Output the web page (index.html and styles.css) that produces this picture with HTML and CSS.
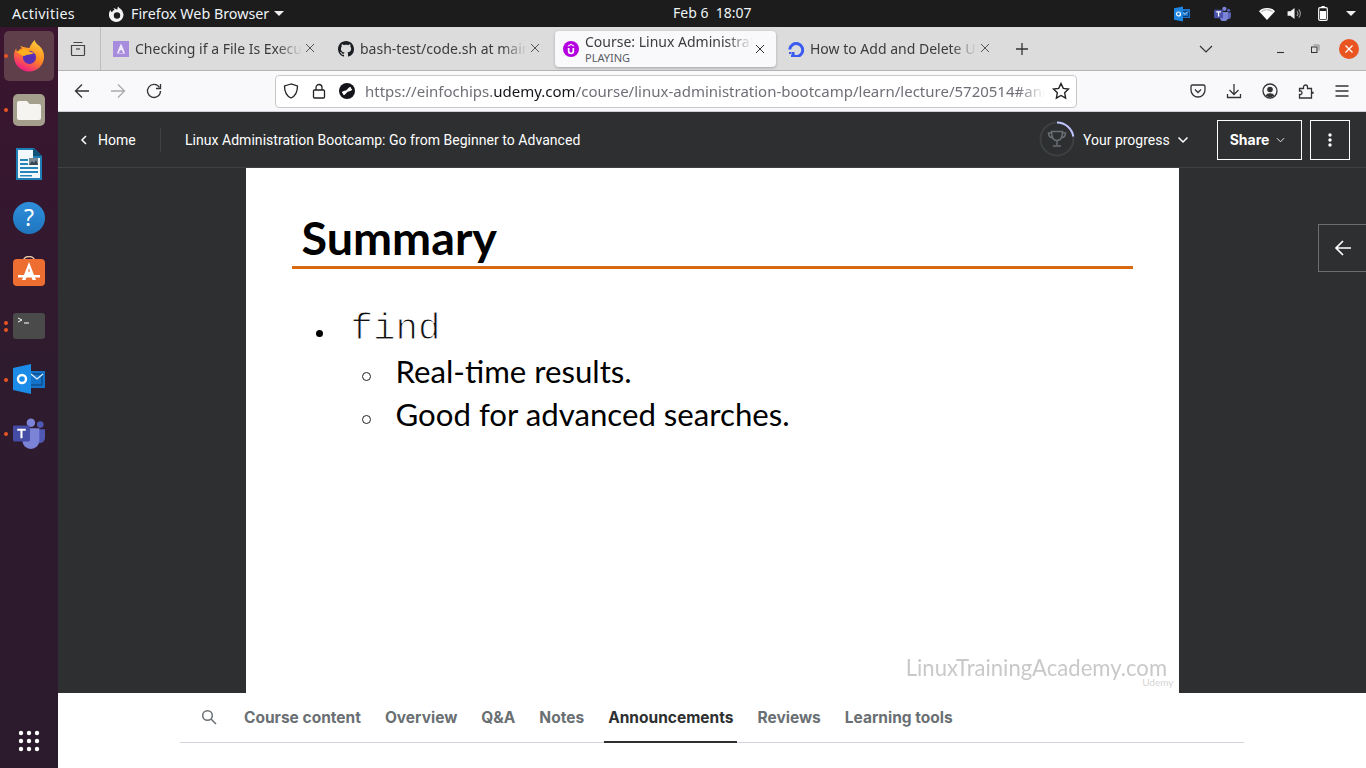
FILE: index.html
```html
<!DOCTYPE html>
<html lang="en">
<head>
<meta charset="utf-8">
<title>Course: Linux Administration Bootcamp</title>
<link rel="stylesheet" href="styles.css">
</head>
<body>
<header class="topbar">
  <div class="top-left">
    <span class="activities">Activities</span>
    <span class="app-menu">
      <svg class="app-icon" viewBox="0 0 16 16"><path fill="#f2f2f2" d="M9 .5c.8 1.400 1.800 1.700 3 2.700A7.300 7.300 0 1 1 1.600 4c.2 1.300.8 2 1.500 2.300C3.300 4.800 4.300 4 5.700 3.900 4.900 3.200 4.500 2.600 4.700 2 6 3 7.500 3 8.600 3.500 8.400 2.500 8.500 1.500 9 .5Z"/><circle cx="8" cy="9.500" r="3.200" fill="#1d1d1d"/></svg>
      <span>Firefox Web Browser</span>
      <i class="caret"></i>
    </span>
  </div>
  <div class="clock">Feb 6&nbsp; 18:07</div>
  <div class="tray">
    <svg class="tray-outlook" viewBox="0 0 16 16"><rect x="6" y="3" width="10" height="9" fill="#1a73c8"/><path d="M7.500 5.500h7v5h-7z" fill="none" stroke="#0c3f78" stroke-width="1"/><path d="M8 5.500l3 3 3-3" fill="none" stroke="#cfe6fa" stroke-width=".9"/><path d="M0 2.300 9 .5v15L0 13.700z" fill="#1e86e0"/><circle cx="4.500" cy="8" r="2" fill="none" stroke="#fff" stroke-width="1.200"/></svg>
    <svg class="tray-teams" viewBox="0 0 18 16"><circle cx="11" cy="3" r="2.300" fill="#7b83d6"/><circle cx="15.500" cy="4.500" r="1.700" fill="#5b63b8"/><path d="M13 7h5v4.500a2.500 2.500 0 0 1-5 0z" fill="#5b63b8"/><path d="M6 6.500h9v5.500a4.500 4.500 0 0 1-9 0z" fill="#7b83d6"/><rect y="4" width="9.500" height="9" rx="1" fill="#4b53aa"/><path d="M2.300 6.300h5M4.800 6.300v5" stroke="#fff" stroke-width="1.400" fill="none"/></svg>
    <svg class="tray-wifi" viewBox="0 0 16 12"><path fill="#fff" d="M8 12 0 3.200C2 1.200 4.800 0 8 0s6 1.200 8 3.200z"/><path fill="#1d1d1d" d="M2 3.400A8.600 8.600 0 0 1 8 1.200c2.300 0 4.400.8 6 2.200l-.8.9A7.600 7.600 0 0 0 8 2.300c-2 0-3.900.8-5.200 2z" opacity=".35"/></svg>
    <svg class="tray-vol" viewBox="0 0 16 14"><path fill="#f2f2f2" d="M0 4.500h3L7.500 1v12L3 9.500H0z"/><path fill="none" stroke="#aaa" stroke-width="1.100" d="M10 4.300a4 4 0 0 1 0 5.400M12 2.500a6.600 6.600 0 0 1 0 9"/></svg>
    <svg class="tray-batt" viewBox="0 0 10 15"><path d="M3.500.5h3v1.300" fill="none" stroke="#fff"/><rect x=".7" y="1.700" width="8.600" height="12.600" rx="1.300" fill="none" stroke="#fff" stroke-width="1.200"/><rect x="2" y="5" width="6" height="8" fill="#fff"/></svg>
    <i class="caret caret-tray"></i>
  </div>
</header>

<div class="desktop">
  <aside class="dock">
    <div class="dock-item active"><i class="dot"></i>
      <svg class="dock-icon" viewBox="0 0 34 34"><defs><linearGradient id="ff" x1=".8" y1="0" x2=".3" y2="1"><stop offset="0" stop-color="#ffd23a"/><stop offset=".5" stop-color="#ff8a20"/><stop offset="1" stop-color="#f0148a"/></linearGradient></defs><path fill="url(#ff)" d="M23 0c.3 2.800 2.800 4.500 5 6.500 3 2.800 5 6.300 5 10.900C33 26.500 26 33.500 17 33.500 8 33.500 1 26 1 17c0-3 .7-6 2.400-8 .2 1.500.6 2.700 1.700 3.500C6 10.400 8 9 10 8.800 8.700 8 8 7 8 6c3 1.700 6 1.700 9.500 2.500C18 6 20.500 3 23 0Z"/><circle cx="17.500" cy="18.500" r="7" fill="#5b2fb5"/><path fill="#ffb01f" d="M3 12.500c2 0 7-3.500 10-2.500 3 1 5 3 9.500 3.500-3 2.500-7.500 1.500-9.500 3-2.500 2-6-3-10-4Z"/></svg>
    </div>
    <div class="dock-item"><i class="dot"></i>
      <svg class="dock-icon" viewBox="0 0 32 32"><rect width="32" height="32" rx="5" fill="#a49e8c"/><path d="M4 9a2 2 0 0 1 2-2h8l2.500 3H26a2 2 0 0 1 2 2v12a2 2 0 0 1-2 2H6a2 2 0 0 1-2-2z" fill="#f6f4f0"/></svg>
    </div>
    <div class="dock-item">
      <svg class="dock-icon" viewBox="0 0 32 32"><path d="M3 0h18l8 8v24H3z" fill="#1d7fb5"/><path d="M5 2h15v8h7v20H5z" fill="#f3f8fb"/><path d="M20 0l9 8h-9z" fill="#0f5378"/><rect x="7" y="11" width="8" height="2" fill="#2585b9"/><rect x="7" y="15" width="8" height="2" fill="#2585b9"/><rect x="7" y="19" width="18" height="2" fill="#2585b9"/><rect x="7" y="23" width="18" height="2" fill="#2585b9"/><rect x="7" y="27" width="12" height="1.500" fill="#2585b9"/><rect x="16" y="10" width="9" height="7" fill="#7a8b97"/><path d="M16 17l3-4 2 2 2-3 2 5z" fill="#37474f"/></svg>
    </div>
    <div class="dock-item">
      <svg class="dock-icon" viewBox="0 0 32 32"><defs><linearGradient id="hp" x1="0" y1="0" x2="0" y2="1"><stop offset="0" stop-color="#2f8fdc"/><stop offset="1" stop-color="#1f75bd"/></linearGradient></defs><circle cx="16" cy="16" r="16" fill="url(#hp)"/><text class="help-q" x="16" y="24" text-anchor="middle">?</text></svg>
    </div>
    <div class="dock-item">
      <svg class="dock-icon" viewBox="0 0 32 32"><path d="M10.500 5c0-6 11-6 11 0" fill="none" stroke="#e9c9a8" stroke-width="1.500"/><rect y="3" width="32" height="27" rx="4" fill="#ee6d31"/><path d="M16 6 9 24h3.500l1.500-4.500h4l1.500 4.500H23z M15 15.500l1-3 1 3z" fill="#fff" fill-rule="evenodd"/><rect x="5" y="19" width="22" height="2.500" fill="#fff"/></svg>
    </div>
    <div class="dock-item"><i class="dot dot-a"></i><i class="dot dot-b"></i>
      <svg class="dock-icon" viewBox="0 0 32 26"><rect width="32" height="26" rx="3" fill="#4a4a4a"/><path d="M5 5l4 2-4 2" fill="none" stroke="#fff" stroke-width="1"/><rect x="11" y="9.500" width="5" height="1" fill="#fff"/></svg>
    </div>
    <div class="dock-item"><i class="dot"></i>
      <svg class="dock-icon" viewBox="0 0 32 32"><rect x="14" y="7" width="18" height="17" fill="#1473c8" /><path d="M17 10h12v11H17z" fill="none" stroke="#0b3f75" stroke-width="1"/><path d="M18 10l6 5 6-5" fill="none" stroke="#dff0ff" stroke-width="1.300"/><path d="M0 4 18 0v30L0 26z" fill="#1b8ce8"/><circle cx="9" cy="15" r="4" fill="none" stroke="#fff" stroke-width="2.400"/></svg>
    </div>
    <div class="dock-item"><i class="dot"></i>
      <svg class="dock-icon" viewBox="0 0 34 34"><circle cx="19" cy="5" r="4.500" fill="#7b83d6"/><circle cx="29" cy="7" r="3.500" fill="#5058b5"/><path d="M23 12h11v9a5.500 5.500 0 0 1-11 0z" fill="#5058b5"/><path d="M10 11h18v13a9 9 0 0 1-18 0z" fill="#7b83d6"/><rect y="8" width="18" height="17" rx="1.500" fill="#444ca6"/><path d="M4.500 12.500h9M9 12.500v9" stroke="#fff" stroke-width="2.200" fill="none"/></svg>
    </div>
    <div class="dock-apps">
      <svg class="grid-icon" viewBox="0 0 22 22" fill="#fff"><circle cx="3" cy="3" r="2.200"/><circle cx="11" cy="3" r="2.200"/><circle cx="19" cy="3" r="2.200"/><circle cx="3" cy="11" r="2.200"/><circle cx="11" cy="11" r="2.200"/><circle cx="19" cy="11" r="2.200"/><circle cx="3" cy="19" r="2.200"/><circle cx="11" cy="19" r="2.200"/><circle cx="19" cy="19" r="2.200"/></svg>
    </div>
  </aside>

  <main class="browser">
    <div class="tabbar">
      <div class="view-all">
        <svg class="ic16" viewBox="0 0 16 16" fill="none" stroke="#444" stroke-width="1.200"><path d="M3.500 1.500h9M1.500 4.500h13v9a1 1 0 0 1-1 1h-11a1 1 0 0 1-1-1z"/><path d="M6 8h4"/></svg>
      </div>
      <div class="tab">
        <svg class="fav" viewBox="0 0 16 16"><rect width="16" height="16" fill="#a78bdc"/><path d="M8 2.500c-1.400 3-3 6-4 10h8c-1-4-2.600-7-4-10zM6 12c.4-2 1.200-3 2-3s1.600 1 2 3z" fill="#efe9fb" fill-rule="evenodd"/></svg>
        <span class="tab-title">Checking if a File Is Executable</span>
        <svg class="x" viewBox="0 0 10 10"><path d="M1 1l8 8M9 1l-8 8"/></svg>
      </div>
      <div class="tab">
        <svg class="fav" viewBox="0 0 16 16"><path fill="#1b1f23" d="M8 0C3.580 0 0 3.580 0 8c0 3.540 2.290 6.530 5.470 7.590.4.070.55-.17.55-.38 0-.19-.01-.82-.01-1.490-2.010.37-2.530-.49-2.690-.94-.09-.23-.48-.94-.82-1.130-.28-.15-.68-.52-.01-.53.63-.01 1.080.58 1.230.82.720 1.210 1.870.87 2.330.66.070-.52.280-.87.510-1.070-1.780-.2-3.640-.89-3.640-3.950 0-.87.310-1.590.820-2.150-.08-.2-.36-1.020.08-2.120 0 0 .67-.21 2.200.82.640-.18 1.320-.27 2-.27s1.360.09 2 .27c1.530-1.040 2.200-.82 2.200-.82.440 1.100.16 1.920.08 2.120.510.560.820 1.270.820 2.150 0 3.070-1.870 3.750-3.650 3.950.29.250.54.730.54 1.480 0 1.070-.01 1.930-.01 2.200 0 .21.150.46.550.38A8.010 8.010 0 0 0 16 8c0-4.420-3.580-8-8-8z"/></svg>
        <span class="tab-title">bash-test/code.sh at main</span>
        <svg class="x" viewBox="0 0 10 10"><path d="M1 1l8 8M9 1l-8 8"/></svg>
      </div>
      <div class="tab tab-active">
        <div class="tab-card">
          <svg class="fav" viewBox="0 0 16 16"><circle cx="8" cy="8" r="8" fill="#b400e0"/><path d="M4.800 7v3a3.200 3.200 0 0 0 6.400 0V7h-1.700v3a1.500 1.500 0 0 1-3 0V7zM8 2.800 4.800 4.700v1.100L8 4l3.200 1.800V4.700z" fill="#fff"/></svg>
          <div class="tab-stack">
            <span class="tab-title">Course: Linux Administration</span>
            <span class="tab-sub">PLAYING</span>
          </div>
          <svg class="x x-dark" viewBox="0 0 10 10"><path d="M1 1l8 8M9 1l-8 8"/></svg>
        </div>
      </div>
      <div class="tab">
        <svg class="fav" viewBox="0 0 16 16"><path fill="none" stroke="#3b5bf0" stroke-width="3" d="M4 14A6.500 6.500 0 1 0 1.700 8.500"/><rect x="3.500" y="11" width="3" height="3" fill="#3b5bf0"/><rect x="1" y="11" width="2" height="2" fill="#3b5bf0"/><rect x="3" y="14" width="2" height="2" fill="#3b5bf0"/></svg>
        <span class="tab-title">How to Add and Delete Users</span>
        <svg class="x" viewBox="0 0 10 10"><path d="M1 1l8 8M9 1l-8 8"/></svg>
      </div>
      <div class="new-tab">
        <svg class="ic14" viewBox="0 0 14 14"><path d="M7 1v12M1 7h12" stroke="#333" stroke-width="1.300" fill="none"/></svg>
      </div>
      <div class="tab-list">
        <svg class="ic14" viewBox="0 0 14 14"><path d="M1 4l6 6 6-6" stroke="#333" stroke-width="1.200" fill="none"/></svg>
      </div>
      <div class="wm-btns">
        <span class="wm"><svg class="ic10" viewBox="0 0 10 10"><path d="M1 8.500h7" stroke="#333" stroke-width="1.100" fill="none"/></svg></span>
        <span class="wm"><svg class="ic10" viewBox="0 0 10 10" fill="none" stroke="#333"><rect x="1.500" y="3" width="5.500" height="5.500"/><path d="M3.500 1h5.500v5.500" stroke="#888"/></svg></span>
        <span class="wm wm-close"><svg class="ic10" viewBox="0 0 10 10"><path d="M1.500 1.500l7 7M8.500 1.500l-7 7" stroke="#fff" stroke-width="1.300" fill="none"/></svg></span>
      </div>
    </div>

    <div class="toolbar">
      <span class="tbtn"><svg class="ic16" viewBox="0 0 16 16" fill="none" stroke="#333" stroke-width="1.300"><path d="M15 8H1.500M8 1.500 1.500 8 8 14.500"/></svg></span>
      <span class="tbtn"><svg class="ic16" viewBox="0 0 16 16" fill="none" stroke="#aaa" stroke-width="1.300"><path d="M1 8h13.500M8 1.500 14.500 8 8 14.500"/></svg></span>
      <span class="tbtn"><svg class="ic16" viewBox="0 0 16 16" fill="none" stroke="#333" stroke-width="1.300"><path d="M13.500 4.500A6.500 6.500 0 1 0 14.500 8"/><path d="M14.500 1v4.500H10" /></svg></span>
      <div class="urlbar">
        <svg class="ic16" viewBox="0 0 16 16" fill="none" stroke="#222" stroke-width="1.300"><path d="M8 1 1.500 3c0 6 1.500 9.800 6.500 12 5-2.200 6.500-6 6.500-12z"/></svg>
        <svg class="ic16" viewBox="0 0 16 16" fill="none" stroke="#222" stroke-width="1.300"><rect x="2.500" y="7" width="11" height="8" rx="1"/><path d="M5 7V4.500a3 3 0 0 1 6 0V7"/></svg>
        <svg class="ic16" viewBox="0 0 16 16"><circle cx="8" cy="8" r="8" fill="#15141a"/><path d="M5 11l6-6M4 9.500l2.500-1M9.500 7.500 12 6.500" stroke="#fff" stroke-width="2" fill="none" stroke-linecap="round"/></svg>
        <span class="url"><span class="url-dim">https://einfochips.</span>udemy.com<span class="url-dim">/course/linux-administration-bootcamp/learn/lecture/5720514#announcements</span></span>
        <svg class="ic18" viewBox="0 0 18 18" fill="none" stroke="#222" stroke-width="1.400"><path d="m9 1.500 2.300 4.900 5.200.7-3.800 3.700.9 5.300L9 13.500l-4.600 2.600.9-5.300L1.500 7.100l5.200-.7z"/></svg>
      </div>
      <div class="tools">
        <svg class="ic16" viewBox="0 0 16 16" fill="none" stroke="#333" stroke-width="1.300"><path d="M2.500 2h11A1.500 1.500 0 0 1 15 3.500V7a7 7 0 0 1-14 0V3.500A1.500 1.500 0 0 1 2.500 2z"/><path d="m5 6.500 3 3 3-3"/></svg>
        <svg class="ic16" viewBox="0 0 16 16" fill="none" stroke="#333" stroke-width="1.300"><path d="M8 1v10M3.500 7 8 11.500 12.500 7M1.500 11v3.500h13V11"/></svg>
        <svg class="ic16" viewBox="0 0 16 16"><circle cx="8" cy="8" r="7" fill="none" stroke="#333" stroke-width="1.300"/><circle cx="8" cy="6.500" r="2.800" fill="#333"/><path d="M3.500 12.500a5 4 0 0 1 9 0 7 7 0 0 1-9 0z" fill="#333"/></svg>
        <svg class="ic16" viewBox="0 0 16 16" fill="none" stroke="#333" stroke-width="1.300"><path d="M1.500 5.500h4V4a2 2 0 0 1 4 0v1.500h4V9.500H15v.5a0 0 0 0 1 0 0H13.500V15h-12v-3.500H3a2 2 0 0 0 0-3.500H1.500z"/></svg>
        <svg class="ic16" viewBox="0 0 16 16" fill="none" stroke="#333" stroke-width="1.300"><path d="M1.500 3h13M1.500 8h13M1.500 13h13"/></svg>
      </div>
    </div>

    <div class="course-head">
      <div class="home">
        <svg class="chev-left" viewBox="0 0 8 10"><path d="M6 1 2 5l4 4" fill="none" stroke="#fff" stroke-width="1.500"/></svg>
        <span>Home</span>
      </div>
      <span class="course-title">Linux Administration Bootcamp: Go from Beginner to Advanced</span>
      <div class="progress">
        <svg class="ring" viewBox="0 0 36 36"><circle cx="18" cy="18" r="16.500" fill="none" stroke="#3e4143" stroke-width="2"/><path d="M18 1.500A16.500 16.500 0 0 1 34.300 15.500" fill="none" stroke="#c0c4fc" stroke-width="2"/><path d="M12.500 10.500h11c0 6-1.500 9-5.500 9s-5.500-3-5.500-9zM12.500 12h-3c0 3 1.500 4.500 4 4.800M23.500 12h3c0 3-1.500 4.500-4 4.800M18 19.500v4.500M14 25h8" fill="none" stroke="#6a6f73" stroke-width="1.500"/></svg>
        <span class="progress-label">Your progress</span>
        <svg class="chev" viewBox="0 0 12 8"><path d="m1.500 1.500 4.500 4.500 4.500-4.500" fill="none" stroke="#fff" stroke-width="1.500"/></svg>
      </div>
      <div class="share">Share <svg class="chev-sm" viewBox="0 0 10 6"><path d="M1 1l4 4 4-4" fill="none" stroke="#fff"/></svg></div>
      <div class="more"><svg class="kebab" viewBox="0 0 4 14" fill="#fff"><circle cx="2" cy="2" r="1.700"/><circle cx="2" cy="7" r="1.700"/><circle cx="2" cy="12" r="1.700"/></svg></div>
    </div>

    <div class="stage">
      <section class="slide">
        <h1 class="slide-title">Summary</h1>
        <div class="slide-rule"></div>
        <ul class="bullets">
          <li class="cmd"><span class="cmd-text">find</span>
            <ul class="sub">
              <li>Real-time results.</li>
              <li>Good for advanced searches.</li>
            </ul>
          </li>
        </ul>
        <div class="mark">
          <span class="mark-main">LinuxTrainingAcademy.com</span>
          <span class="mark-sub">Udemy</span>
        </div>
      </section>
      <div class="side-arrow">
        <svg class="ic18" viewBox="0 0 18 18" fill="none" stroke="#fff" stroke-width="1.700"><path d="M17 9H2M9 2 2 9l7 7"/></svg>
      </div>
    </div>

    <nav class="lecture-tabs">
      <div class="lt-inner">
        <svg class="lt-search" viewBox="0 0 16 16" fill="none" stroke="#6a6f73" stroke-width="1.500"><circle cx="6.500" cy="6.500" r="4.800"/><path d="m10 10 5 5"/></svg>
        <span class="lt">Course content</span>
        <span class="lt">Overview</span>
        <span class="lt">Q&amp;A</span>
        <span class="lt">Notes</span>
        <span class="lt lt-active">Announcements</span>
        <span class="lt">Reviews</span>
        <span class="lt">Learning tools</span>
      </div>
    </nav>
  </main>
</div>
</body>
</html>
```
FILE: styles.css
```css
* { box-sizing: border-box; }
html, body { margin: 0; height: 100%; overflow: hidden; }
body { width: 1366px; height: 768px; display: flex; flex-direction: column; font-family: "Noto Sans", sans-serif; background: #2d2f31; }
svg { display: block; flex: none; }

.topbar { height: 27px; flex: none; background: #1c1c1c; color: #eef3f7; display: flex; align-items: center; position: relative; font-size: 14.300px; font-family: "Noto Sans", sans-serif; }
.top-left { display: flex; align-items: center; padding-left: 12px; }
.activities { width: 97px; letter-spacing: .35px; }
.app-menu { display: flex; align-items: center; }
.app-icon { width: 16px; height: 16px; margin-right: 6px; }
.caret { display: block; width: 0; height: 0; border: 5px solid transparent; border-top: 5px solid #eee; border-bottom: 0; margin-left: 5px; }
.clock { position: absolute; left: 673px; top: 4px; line-height: 18px; font-size: 14px; }
.tray { margin-left: auto; display: flex; align-items: center; padding-right: 10px; }
.tray-outlook { width: 16px; height: 16px; margin-right: 24px; }
.tray-teams { width: 17px; height: 15px; margin-right: 28px; }
.tray-wifi { width: 16px; height: 12px; margin-right: 12px; }
.tray-vol { width: 16px; height: 13px; margin-right: 15px; }
.tray-batt { width: 10px; height: 15px; margin-right: 13px; }
.caret-tray { margin-left: 5px; border-width: 5px; border-bottom: 0; }

.desktop { flex: 1; display: flex; min-height: 0; }
.dock { width: 58px; flex: none; background: linear-gradient(180deg, #3b1430 0%, #2f1b2e 45%, #2b1a2c 100%); display: flex; flex-direction: column; align-items: center; padding-top: 1px; position: relative; }
.dock-item { width: 50px; height: 54px; display: flex; align-items: center; justify-content: center; position: relative; border-radius: 5px; flex: none; }
.dock-item.active { height: 50px; margin: 3px 0 2px; background: #5e3f4a; }
.dot { position: absolute; width: 4px; height: 4px; left: 0; top: 50%; margin-top: -2px; border-radius: 50%; background: #e95420; }
.dot-a { margin-top: -5px; }
.dot-b { margin-top: 2px; }
.dock-icon { width: 32px; height: 32px; }
.help-q { font: 23px "Noto Sans", sans-serif; fill: #fff; }
.dock-apps { margin-top: auto; height: 54px; display: flex; align-items: center; padding-bottom: 0; }
.grid-icon { width: 22px; height: 22px; }

.browser { flex: 1; min-width: 0; display: flex; flex-direction: column; }
.ic10 { width: 10px; height: 10px; }
.ic14 { width: 14px; height: 14px; }
.ic16 { width: 16px; height: 16px; }
.ic18 { width: 18px; height: 18px; }

.tabbar { height: 44px; flex: none; background: #dcdcdc; border-bottom: 1px solid #b4b4b4; display: flex; align-items: center; color: #3c3c3c; }
.view-all { width: 43px; height: 43px; border-right: 1px solid #bdbdbd; display: flex; align-items: center; justify-content: center; margin-right: 3px; padding-right: 2px; }
.tab { width: 225px; height: 43px; padding-left: 9px; display: flex; align-items: center; flex: none; position: relative; }
.fav { width: 16px; height: 16px; margin-right: 6px; }
.tab-title { display: block; width: 167px; overflow: hidden; white-space: nowrap; font-size: 14px; line-height: 18px; -webkit-mask-image: linear-gradient(90deg, #000 85%, transparent 100%); mask-image: linear-gradient(90deg, #000 85%, transparent 100%); }
.x { width: 10px; height: 10px; margin-left: 3px; margin-top: -1px; fill: none; stroke: #555; stroke-width: 1; }
.x-dark { stroke: #333; margin-left: 3px; margin-top: 0; }
.tab-active { padding-left: 1px; }
.tab-card { width: 221px; height: 36px; background: #f9f9fb; border-radius: 4px; box-shadow: 0 1px 3px rgba(0,0,0,.25); display: flex; align-items: center; padding-left: 8px; }
.tab-stack { display: flex; flex-direction: column; width: 167px; }
.tab-sub { font-size: 11px; line-height: 14px; color: #5b5b66; margin-top: 0; }
.new-tab { width: 14px; margin-left: 11px; }
.tab-list { margin-left: 170px; }
.wm-btns { display: flex; margin-left: 51px; align-items: center; }
.wm { width: 34px; display: flex; justify-content: center; align-items: center; height: 20px; }
.wm-close { width: 20px; height: 20px; margin-left: 7px; background: #e95420; border-radius: 50%; }

.toolbar { height: 41px; flex: none; background: #f9f9fb; border-bottom: 1px solid #cfcfd8; display: flex; align-items: center; padding-left: 6px; }
.tbtn { width: 36px; display: flex; justify-content: center; }
.urlbar { width: 802px; height: 33px; background: #fff; border: 1px solid #c8c8c8; border-radius: 4px; display: flex; align-items: center; padding-left: 7px; gap: 12px; margin-left: 103px; }
.url { width: 680px; margin-left: -2px; overflow: hidden; white-space: nowrap; font-size: 15px; color: #15141a; -webkit-mask-image: linear-gradient(90deg, #000 96%, transparent 100%); mask-image: linear-gradient(90deg, #000 96%, transparent 100%); }
.url-dim { color: #6f6f78; }
.urlbar .ic18 { margin-left: -5px; }
.tools { display: flex; gap: 20px; margin-left: 113px; }

.course-head { height: 56px; flex: none; background: #2d2f31; border-bottom: 1px solid #3e4143; display: flex; align-items: center; color: #fff; font-family: Roboto, sans-serif; font-size: 14px; }
.home { width: 103px; height: 24px; display: flex; align-items: center; padding-left: 22px; border-right: 1px solid #3e4143; gap: 10px; }
.chev-left { width: 8px; height: 10px; }
.course-title { margin-left: 24px; letter-spacing: .035px; }
.progress { display: flex; align-items: center; margin-left: auto; }
.ring { width: 36px; height: 36px; margin-right: 8px; margin-left: -1px; margin-top: -1px; }
.progress-label { width: 87px; }
.chev { width: 12px; height: 8px; margin-left: 7px; }
.share { width: 85px; height: 40px; margin-left: 28px; padding-right: 4px; border: 1px solid #fff; display: flex; align-items: center; justify-content: center; gap: 7px; font-weight: 700; font-family: Inter, sans-serif; font-size: 14px; }
.chev-sm { width: 9px; height: 6px; }
.more { width: 40px; height: 40px; margin: 0 16px 0 8px; border: 1px solid #fff; display: flex; align-items: center; justify-content: center; }
.kebab { width: 4px; height: 14px; }

.stage { flex: 1; min-height: 0; background: #2d2f31; display: flex; justify-content: center; position: relative; }
.slide { width: 933px; background: #fff; display: flex; flex-direction: column; color: #000; font-family: Lato, sans-serif; position: relative; }
.slide-title { margin: 41px 0 0 56px; height: 58px; font-size: 46.700px; line-height: 56px; font-weight: 700; }
.slide-rule { height: 3px; margin: -1px 46px 0 46px; background: #d9690f; }
.bullets { list-style: none; margin: 36px 0 0; padding: 0 0 0 105px; }
.cmd { font-family: "Liberation Mono", monospace; font-size: 37.500px; line-height: 43px; position: relative; }
.cmd-text { color: #111; -webkit-text-stroke: 1.100px #fff; position: relative; top: 3px; }
.cmd::before { content: ""; position: absolute; left: -35px; top: 25px; width: 7px; height: 7px; background: #000; border-radius: 50%; }
.sub { list-style: none; margin: 2px 0 0; padding: 0 0 0 45px; font-family: Lato, sans-serif; font-size: 31.200px; line-height: 43px; }
.sub li { position: relative; }
.sub li::before { content: ""; position: absolute; left: -34px; top: 22px; width: 7px; height: 7px; border: 1px solid #222; border-radius: 50%; }
.mark { position: absolute; right: 11px; bottom: 6px; display: flex; flex-direction: column; align-items: flex-end; color: #c9c9c9; }
.mark-main { font-size: 24px; line-height: 20px; font-weight: 400; transform: scaleX(.92); transform-origin: right center; }
.mark-sub { font-size: 10px; line-height: 10px; margin-right: -6px; color: #d5d5d5; }
.side-arrow { position: absolute; right: 0; top: 56px; width: 48px; height: 48px; border: 1px solid #6a6f73; border-right: 0; display: flex; align-items: center; justify-content: center; background: #2d2f31; }

.lecture-tabs { height: 75px; flex: none; background: #fff; padding: 0 122px; }
.lt-inner { height: 50px; border-bottom: 1px solid #d1d7dc; display: flex; align-items: stretch; padding-left: 21px; font-family: Inter, sans-serif; font-size: 15.500px; font-weight: 700; color: #6a6f73; }
.lt-search { width: 16px; height: 16px; margin: 16px 27px 0 0; }
.lt { padding: 0 4px; margin: 0 16px 0 -4px; line-height: 50px; border-bottom: 2px solid transparent; height: 50px; }
.lt + .lt { margin-left: 0; }
.lt-active { color: #2d2f31; border-bottom-color: #2d2f31; }
```
